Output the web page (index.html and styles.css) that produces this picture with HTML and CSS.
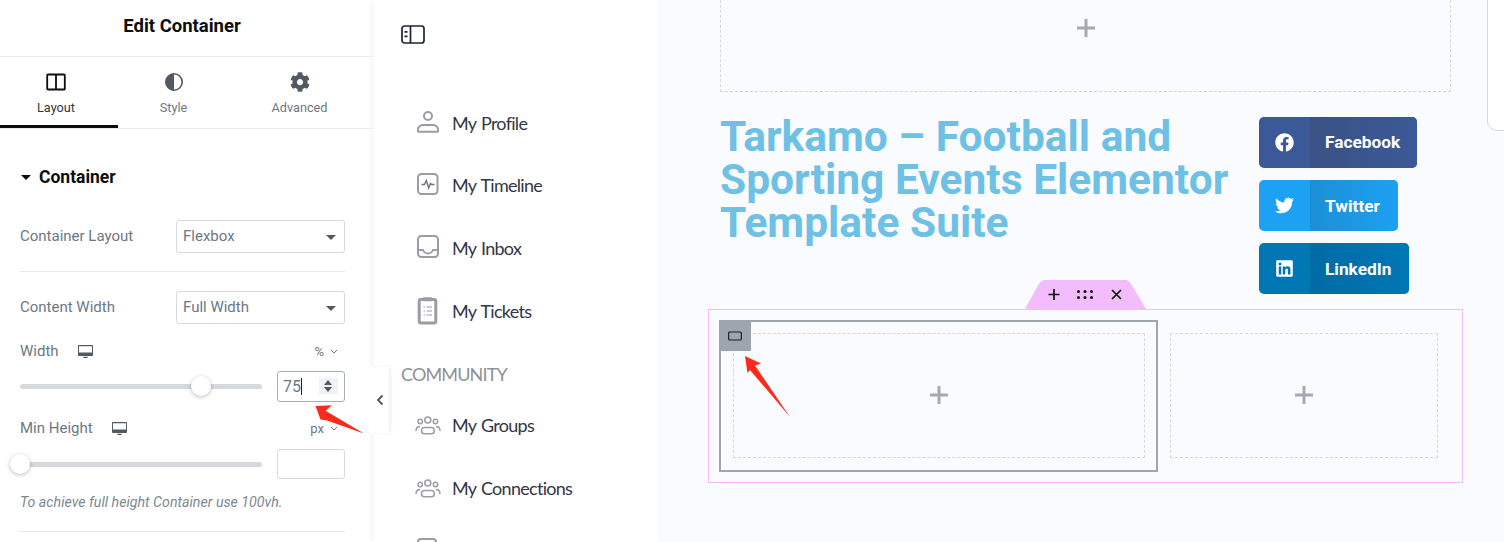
FILE: index.html
```html
<!DOCTYPE html>
<html lang="en">
<head>
    <meta charset="UTF-8">
    <meta name="viewport" content="width=device-width, initial-scale=1.0">
    <title>Edit Container</title>
    <link rel="stylesheet" href="styles.css">
</head>
<body>
    <div class="app">
        <!-- Editor panel -->
        <aside class="panel">
            <header class="panel-header">Edit Container</header>
            <nav class="tabs">
                <div class="tab tab-layout active">
                    <svg class="tab-icon" viewBox="0 0 20 20"><path d="M2 2.5h16a.8.8 0 0 1 .8.8v13.4a.8.8 0 0 1-.8.8H2a.8.8 0 0 1-.8-.8V3.300a.8.8 0 0 1 .8-.8zM10 2.500v15" fill="none" stroke="#0c0d0e" stroke-width="1.800"/></svg>
                    <span>Layout</span>
                </div>
                <div class="tab tab-style">
                    <svg class="tab-icon" viewBox="0 0 20 20"><circle cx="10" cy="10" r="8.200" fill="none" stroke="#515962" stroke-width="1.600"/><path d="M10 1.800a8.200 8.200 0 0 0 0 16.400z" fill="#515962"/></svg>
                    <span>Style</span>
                </div>
                <div class="tab tab-advanced">
                    <svg class="tab-icon" viewBox="0 0 512 512"><path fill="#515962" d="M487.4 315.7l-42.6-24.6c4.3-23.2 4.3-47 0-70.2l42.6-24.6c4.9-2.800 7.100-8.600 5.500-14-11.100-35.600-30-67.800-54.700-94.600-3.800-4.100-10-5.100-14.800-2.300L380.800 110c-17.900-15.400-38.500-27.300-60.800-35.100V25.800c0-5.600-3.900-10.500-9.400-11.700-36.700-8.200-74.300-7.800-109.200 0-5.500 1.200-9.400 6.100-9.400 11.700V75c-22.200 7.900-42.800 19.800-60.800 35.100L88.700 85.500c-4.900-2.800-11-1.900-14.800 2.300-24.700 26.700-43.600 58.900-54.700 94.600-1.700 5.400.6 11.200 5.500 14L67.300 221c-4.300 23.200-4.300 47 0 70.200l-42.6 24.600c-4.900 2.800-7.100 8.600-5.500 14 11.100 35.600 30 67.800 54.700 94.600 3.800 4.100 10 5.100 14.800 2.300l42.600-24.600c17.900 15.400 38.500 27.300 60.800 35.100v49.200c0 5.600 3.900 10.500 9.400 11.700 36.700 8.200 74.300 7.800 109.200 0 5.500-1.200 9.400-6.100 9.400-11.700v-49.200c22.200-7.900 42.800-19.800 60.800-35.100l42.600 24.600c4.900 2.800 11 1.900 14.800-2.300 24.700-26.700 43.600-58.900 54.700-94.600 1.500-5.500-.7-11.300-5.600-14.100zM256 336c-44.100 0-80-35.900-80-80s35.900-80 80-80 80 35.900 80 80-35.900 80-80 80z"/></svg>
                    <span>Advanced</span>
                </div>
            </nav>

            <div class="panel-body">
                <div class="section-title"><span class="caret-big"></span>Container</div>

                <div class="field field-first">
                    <label>Container Layout</label>
                    <div class="select">Flexbox<span class="caret"></span></div>
                </div>
                <div class="divider divider-one"></div>
                <div class="field">
                    <label>Content Width</label>
                    <div class="select">Full Width<span class="caret"></span></div>
                </div>

                <div class="unit-row unit-width">
                    <label>Width</label>
                    <svg class="device" viewBox="0 0 14 14"><path d="M1 1.500h12a.7.7 0 0 1 .7.7v7.600a.7.7 0 0 1-.7.7H1a.7.7 0 0 1-.7-.7V2.200a.7.7 0 0 1 .7-.7z" fill="none" stroke="#515962" stroke-width="1.200"/><path d="M.5 8h13v2.500H.5zM5 12h4v1H5z" fill="#515962"/></svg>
                    <span class="unit">%<svg class="chev" viewBox="0 0 8 5"><path d="M1 1l3 3 3-3" fill="none" stroke="#6d7882" stroke-width="1"/></svg></span>
                </div>
                <div class="slider-row">
                    <div class="slider"><span class="thumb thumb-width"></span></div>
                    <div class="num-input num-active">
                        <span class="num-value">75</span>
                        <span class="spinner"><i class="up"></i><i class="down"></i></span>
                    </div>
                </div>

                <div class="unit-row unit-height">
                    <label>Min Height</label>
                    <svg class="device" viewBox="0 0 14 14"><path d="M1 1.500h12a.7.7 0 0 1 .7.7v7.600a.7.7 0 0 1-.7.7H1a.7.7 0 0 1-.7-.7V2.200a.7.7 0 0 1 .7-.7z" fill="none" stroke="#515962" stroke-width="1.200"/><path d="M.5 8h13v2.500H.5zM5 12h4v1H5z" fill="#515962"/></svg>
                    <span class="unit">px<svg class="chev" viewBox="0 0 8 5"><path d="M1 1l3 3 3-3" fill="none" stroke="#6d7882" stroke-width="1"/></svg></span>
                </div>
                <div class="slider-row slider-row-height">
                    <div class="slider"><span class="thumb thumb-height"></span></div>
                    <div class="num-input"></div>
                </div>
                <p class="note">To achieve full height Container use 100vh.</p>
                <div class="divider divider-two"></div>
            </div>
        </aside>

        <!-- Site menu inside the page -->
        <section class="site-nav">
            <svg class="menu-toggle" viewBox="0 0 24 19"><rect x="1" y="1" width="22" height="17" rx="2.500" fill="none" stroke="#1f2433" stroke-width="1.700"/><path d="M9.500 1v17" stroke="#1f2433" stroke-width="1.700"/><path d="M3.500 6h3v1.800h-3zM3.500 10.500h3v1.800h-3z" fill="#1f2433"/></svg>

            <ul class="menu menu-account">
                <li>
                    <svg viewBox="0 0 24 24"><circle cx="12" cy="5" r="4"/><path d="M2 20v-1.500c0-2.800 2.700-4.500 5.500-4.500h9c2.800 0 5.500 1.700 5.500 4.500V20a.8.8 0 0 1-.8.8H2.800A.8.8 0 0 1 2 20z"/></svg>
                    My Profile
                </li>
                <li>
                    <svg viewBox="0 0 24 24"><rect x="2" y="0" width="19.500" height="20" rx="3.500"/><path d="M5.500 10.500h3l1.800-4 2.400 7.500 1.800-4.500 1 1h3" stroke="#6f717b" stroke-width="1.400"/></svg>
                    My Timeline
                </li>
                <li>
                    <svg viewBox="0 0 24 24"><rect x="2" y="-1" width="20" height="21" rx="3.500"/><path d="M2 13h5c1 2.500 2.500 3.500 5 3.500s4-1 5-3.500h5"/></svg>
                    My Inbox
                </li>
                <li>
                    <svg class="ticket-icon" viewBox="0 0 24 24"><rect x="3.200" y="-.5" width="16.600" height="23.500" rx="1.500"/><path d="M8 -2h7v2.500H8z" fill="#9b9ca5" stroke-width="1.500"/><path d="M7.500 7h1.500M10.500 7h5.500M7.500 11h1.500M10.500 11h5.500M7.500 15h1.500M10.500 15h5.500" stroke-width="1.200"/></svg>
                    My Tickets
                </li>
            </ul>

            <div class="menu-heading">COMMUNITY</div>

            <ul class="menu">
                <li>
                    <svg class="group-icon" viewBox="0 0 26 24"><circle cx="12.800" cy="7" r="3"/><circle cx="5.200" cy="8.500" r="2.200"/><circle cx="20.500" cy="8.500" r="2.200"/><rect x="6.500" y="14.500" width="12.800" height="6.300" rx="3.100"/><path d="M1 18c0-2.500 1.500-4.500 4-4.500M25 18c0-2.500-1.500-4.500-4-4.500"/></svg>
                    My Groups
                </li>
                <li>
                    <svg class="group-icon" viewBox="0 0 26 24"><circle cx="12.800" cy="7" r="3"/><circle cx="5.200" cy="8.500" r="2.200"/><circle cx="20.500" cy="8.500" r="2.200"/><rect x="6.500" y="14.500" width="12.800" height="6.300" rx="3.100"/><path d="M1 18c0-2.500 1.500-4.500 4-4.500M25 18c0-2.500-1.500-4.500-4-4.500"/></svg>
                    My Connections
                </li>
                <li>
                    <svg viewBox="0 0 24 24"><rect x="2" y="0" width="18" height="21" rx="3"/></svg>
                </li>
            </ul>
        </section>

        <!-- Canvas preview -->
        <main class="preview">
            <div class="drop-top">
                <svg class="plus" viewBox="0 0 20 20"><path d="M10 1v18M1 10h18"/></svg>
            </div>

            <div class="hero">
                <h1>Tarkamo – Football and Sporting Events Elementor Template Suite</h1>
                <div class="share-buttons">
                    <a class="share share-facebook">
                        <span class="share-icon"><svg viewBox="0 0 512 512"><path fill="#fff" d="M504 256C504 119 393 8 256 8S8 119 8 256c0 123.780 90.690 226.380 209.250 245V327.690h-63V256h63v-54.640c0-62.150 37-96.480 93.670-96.480 27.140 0 55.520 4.840 55.520 4.840v61h-31.280c-30.800 0-40.410 19.120-40.410 38.730V256h68.780l-11 71.690h-57.780V501C413.310 482.380 504 379.780 504 256z"/></svg></span>
                        <span class="share-label">Facebook</span>
                    </a>
                    <a class="share share-twitter">
                        <span class="share-icon"><svg viewBox="0 0 512 512"><path fill="#fff" d="M459.370 151.716c.325 4.548.325 9.097.325 13.645 0 138.720-105.583 298.558-298.558 298.558-59.452 0-114.680-17.219-161.137-47.106 8.447.974 16.568 1.299 25.340 1.299 49.055 0 94.213-16.568 130.274-44.832-46.132-.975-84.792-31.188-98.112-72.772 6.498.974 12.995 1.624 19.818 1.624 9.421 0 18.843-1.300 27.614-3.573-48.081-9.747-84.143-51.980-84.143-102.985v-1.299c13.969 7.797 30.214 12.670 47.431 13.319-28.264-18.843-46.781-51.005-46.781-87.391 0-19.492 5.197-37.360 14.294-52.954 51.655 63.675 129.300 105.258 216.365 109.807-1.624-7.797-2.599-15.918-2.599-24.040 0-57.828 46.782-104.934 104.934-104.934 30.213 0 57.502 12.670 76.670 33.137 23.715-4.548 46.456-13.320 66.599-25.340-7.798 24.366-24.366 44.833-46.132 57.827 21.117-2.273 41.584-8.122 60.426-16.243-14.292 20.791-32.161 39.308-52.628 54.253z"/></svg></span>
                        <span class="share-label">Twitter</span>
                    </a>
                    <a class="share share-linkedin">
                        <span class="share-icon"><svg viewBox="0 0 448 512"><path fill="#fff" d="M416 32H31.900C14.300 32 0 46.500 0 64.300v383.400C0 465.500 14.300 480 31.900 480H416c17.600 0 32-14.500 32-32.300V64.300c0-17.800-14.400-32.300-32-32.300zM135.400 416H69V202.200h66.500V416zm-33.200-243c-21.300 0-38.500-17.300-38.500-38.500S80.900 96 102.200 96c21.200 0 38.500 17.300 38.500 38.500 0 21.300-17.200 38.500-38.500 38.500zm282.100 243h-66.400V312c0-24.800-.5-56.700-34.500-56.700-34.600 0-39.900 27-39.900 54.900V416h-66.400V202.200h63.700v29.200h.9c8.900-16.800 30.600-34.500 62.900-34.500 67.200 0 79.700 44.300 79.700 101.900V416z"/></svg></span>
                        <span class="share-label">LinkedIn</span>
                    </a>
                </div>
            </div>

            <div class="row-section">
                <svg class="section-handle" viewBox="0 0 121 29">
                    <path d="M0 29L13.500 4.500Q16 0 20 0H100Q104 0 106.500 4.500L121 29z" fill="#f3bcfc"/>
                    <path d="M29 9v11M23.500 14.500h11M87 10l9 9M96 10l-9 9" stroke="#111" stroke-width="1.700" fill="none"/>
                    <g fill="#111"><circle cx="53.500" cy="11.500" r="1.500"/><circle cx="60" cy="11.500" r="1.500"/><circle cx="66.500" cy="11.500" r="1.500"/><circle cx="53.500" cy="17.500" r="1.500"/><circle cx="60" cy="17.500" r="1.500"/><circle cx="66.500" cy="17.500" r="1.500"/></g>
                </svg>
                <div class="col col-selected">
                    <span class="col-handle"><svg viewBox="0 0 16 12"><rect x="1.700" y="2" width="12.600" height="8" rx="1" fill="none" stroke="#14202e" stroke-width="1.200"/></svg></span>
                    <div class="drop-zone">
                        <svg class="plus" viewBox="0 0 20 20"><path d="M10 1v18M1 10h18"/></svg>
                    </div>
                </div>
                <div class="col col-plain">
                    <div class="drop-zone">
                        <svg class="plus" viewBox="0 0 20 20"><path d="M10 1v18M1 10h18"/></svg>
                    </div>
                </div>
            </div>

            <div class="corner-box"></div>
        </main>

        <!-- Overlays -->
        <div class="collapse-tab"><svg viewBox="0 0 8 12"><path d="M6.500 1.500L2 6l4.500 4.500" fill="none" stroke="#4e5660" stroke-width="1.800"/></svg></div>
        <svg class="arrow arrow-input" viewBox="0 0 60 40"><path d="M1.500 11L18 10.300 11.500 15.700 50 38.500 13 25.500 6.500 24.500z" fill="#fb2a1c"/></svg>
        <svg class="arrow arrow-handle" viewBox="0 0 60 70"><path d="M5 6L21 13.500 15 15.500 50 67 10 20 7.500 23z" fill="#fb2a1c"/></svg>
    </div>
</body>
</html>
```

FILE: styles.css
```css
body {
    margin: 0;
    font-family: 'Roboto', sans-serif;
    overflow: hidden;
    background: #fff;
}

.app {
    position: relative;
    display: flex;
    height: 542px;
    overflow: hidden;
}

/* Editor panel */
.panel {
    width: 370px;
    flex: none;
    background: #fff;
    box-shadow: 2px 0 6px rgba(0,0,0,0.05);
    z-index: 1;
}

.panel-header {
    height: 56px;
    line-height: 52px;
    padding-right: 6px;
    text-align: center;
    font-size: 18.500px;
    font-weight: 700;
    color: #0c0d0e;
    border-bottom: 1px solid #e6e8ea;
}

.tabs {
    display: flex;
    height: 71px;
    border-bottom: 1px solid #e6e8ea;
}

.tab {
    display: flex;
    flex-direction: column;
    align-items: center;
    box-sizing: border-box;
    flex: none;
    padding-top: 15px;
    font-size: 12.700px;
    color: #6d7882;
}

.tab span {
    margin-top: 8px;
    line-height: 16px;
}

.tab-icon {
    width: 20px;
    height: 20px;
}

.tab-layout {
    width: 118px;
    padding-right: 6px;
}

.tab-style {
    width: 111px;
}

.tab-advanced {
    width: 141px;
}

.tab.active {
    color: #32373c;
    border-bottom: 3px solid #0c0d0e;
}

.panel-body {
    padding: 0 25px 0 20px;
}

.section-title {
    display: flex;
    align-items: center;
    margin-top: 38px;
    height: 20px;
    font-size: 17.500px;
    font-weight: 700;
    color: #0c0d0e;
}

.caret-big {
    width: 0;
    height: 0;
    margin: 1px 8px 0 1px;
    border-left: 5px solid transparent;
    border-right: 5px solid transparent;
    border-top: 5px solid #0c0d0e;
}

.field {
    display: flex;
    justify-content: space-between;
    align-items: center;
    font-size: 15px;
    color: #6d7882;
}

.field label {
    padding-bottom: 2px;
}

.field-first {
    margin-top: 33px;
}

.select {
    position: relative;
    box-sizing: border-box;
    width: 169px;
    height: 33px;
    line-height: 31px;
    padding-left: 6px;
    border: 1px solid #d5d8dc;
    border-radius: 3px;
}

.caret {
    position: absolute;
    right: 8px;
    top: 14px;
    border-left: 5px solid transparent;
    border-right: 5px solid transparent;
    border-top: 5px solid #515962;
}

.divider {
    height: 1px;
    background: #e6e8ea;
}

.divider-one {
    margin: 18px 0 19px;
}

.divider-two {
    margin-top: 20px;
}

.unit-row {
    display: flex;
    align-items: center;
    height: 20px;
    font-size: 15px;
    color: #6d7882;
}

.unit-width {
    margin-top: 17px;
}

.unit-height {
    margin-top: 16px;
}

.device {
    width: 15px;
    height: 15px;
    margin-left: 19px;
}

.unit {
    display: flex;
    align-items: center;
    margin-left: auto;
    margin-right: 7px;
    font-size: 13px;
}

.chev {
    width: 8px;
    height: 5px;
    margin-left: 6px;
}

.slider-row {
    display: flex;
    align-items: center;
    justify-content: space-between;
    margin-top: 10px;
}

.slider-row-height {
    margin-top: 11px;
}

.slider {
    position: relative;
    width: 242px;
    height: 5px;
    border-radius: 3px;
    background: #d5d8dc;
}

.thumb {
    position: absolute;
    top: -8px;
    width: 20px;
    height: 20px;
    border-radius: 50%;
    background: #fff;
    box-shadow: 0 1px 4px rgba(0,0,0,0.28);
}

.thumb-width {
    left: 171px;
}

.thumb-height {
    left: -10px;
}

.num-input {
    position: relative;
    box-sizing: border-box;
    display: flex;
    align-items: center;
    width: 68px;
    height: 31px;
    border: 1px solid #d5d8dc;
    border-radius: 3px;
}

.slider-row-height .num-input {
    height: 30px;
}

.num-active {
    border-color: #a4afb7;
    font-size: 16px;
    color: #6d7882;
}

.num-value {
    margin-left: 5px;
    height: 17px;
    line-height: 17px;
    border-right: 1px solid #222;
}

.spinner {
    position: absolute;
    top: 6px;
    right: 6px;
    width: 19px;
    height: 16px;
    background: #f1f2f3;
}

.spinner i {
    position: absolute;
    left: 5px;
    border-left: 4.500px solid transparent;
    border-right: 4.500px solid transparent;
}

.spinner .up {
    top: 2px;
    border-bottom: 5px solid #515962;
}

.spinner .down {
    bottom: 2px;
    border-top: 5px solid #515962;
}

.note {
    margin: 14px 0 0;
    font-size: 14.200px;
    font-style: italic;
    color: #7d8790;
    line-height: 18px;
}

/* Site menu */
.site-nav {
    width: 288px;
    flex: none;
    box-sizing: border-box;
    padding: 25px 0 0 31px;
    background: #fff;
    font-family: 'Lato', sans-serif;
    color: #333645;
}

.menu-toggle {
    display: block;
    width: 24px;
    height: 19px;
}

.menu {
    list-style: none;
    margin: 0;
    padding: 0 0 0 15px;
}

.menu li {
    display: flex;
    align-items: center;
    gap: 12px;
    height: 24px;
    margin-bottom: 39px;
    font-size: 18px;
    letter-spacing: -0.72px;
    word-spacing: 1.200px;
}

.menu svg {
    width: 24px;
    height: 24px;
    flex: none;
    fill: none;
    stroke: #9b9ca5;
    stroke-width: 2;
    overflow: visible;
}

.menu svg.group-icon {
    width: 26px;
    margin: 0 -1px;
    stroke-width: 1.500;
}

.menu svg.ticket-icon {
    stroke-width: 3;
}

.menu-account {
    margin-top: 67px;
}

.menu-account li:first-child {
    margin-bottom: 38px;
}

.menu-account li:not(:first-child) svg {
    margin-top: 2px;
}

.menu-heading {
    margin: 0 0 27px;
    font-size: 18px;
    line-height: 24px;
    letter-spacing: -0.85px;
    color: #8f9099;
}

/* Preview */
.preview {
    position: relative;
    flex: 1;
    background: #fafbfe;
    padding-left: 62px;
}

.plus {
    width: 20px;
    height: 20px;
    fill: none;
    stroke: #a4a9b3;
    stroke-width: 3;
}

.drop-top {
    display: flex;
    align-items: center;
    justify-content: center;
    box-sizing: border-box;
    width: 731px;
    height: 92px;
    padding-bottom: 36px;
    border: 1px dashed #d5d8dc;
    border-top: none;
}

.hero {
    display: flex;
    margin-top: 25px;
}

h1 {
    width: 539px;
    flex: none;
    margin: -1px 0 0;
    font-size: 42.500px;
    line-height: 42.800px;
    font-weight: 700;
    color: #6ec1e4;
}

.share-buttons {
    display: flex;
    flex-direction: column;
    align-items: flex-start;
    gap: 12px;
}

.share {
    display: flex;
    height: 51px;
    border-radius: 5px;
    overflow: hidden;
    color: #fff;
    font-size: 17.300px;
    font-weight: 700;
}

.share-icon {
    display: flex;
    align-items: center;
    justify-content: center;
    width: 51px;
}

.share-icon svg {
    width: 19px;
    height: 19px;
}

.share-label {
    display: flex;
    align-items: center;
    padding: 0 17px 0 15px;
}

.share-facebook {
    background: #3b5998;
}

.share-facebook .share-label {
    background: linear-gradient(90deg, #3a5285, #3b5998);
    padding-bottom: 1px;
}

.share-twitter {
    background: #1da1f2;
}

.share-twitter .share-label {
    background: linear-gradient(90deg, #1c8fd6, #1da1f2);
    padding-right: 18px;
}

.share-linkedin {
    background: #0077b5;
}

.share-linkedin .share-label {
    background: linear-gradient(90deg, #006ba4, #0077b5);
    padding-right: 18px;
}

.row-section {
    position: relative;
    display: flex;
    box-sizing: border-box;
    width: 755px;
    height: 174px;
    margin: 15px 0 0 -12px;
    padding: 10px 12px 10px 10px;
    border: 1px solid #f3bcfc;
}

.section-handle {
    position: absolute;
    top: -30px;
    left: 316px;
    width: 121px;
    height: 29px;
}

.col {
    box-sizing: border-box;
    padding: 12px;
}

.col-selected {
    position: relative;
    width: 439px;
    height: 152px;
    padding: 11px 11px 12px 12px;
    border: 2px solid #9da5ae;
}

.col-plain {
    width: 292px;
    padding-top: 13px;
    padding-bottom: 13px;
}

.col-handle {
    position: absolute;
    top: -1px;
    left: -2px;
    display: flex;
    align-items: center;
    justify-content: center;
    width: 32px;
    height: 30px;
    background: #9da5ae;
}

.col-handle svg {
    width: 16px;
    height: 12px;
}

.drop-zone {
    display: flex;
    align-items: center;
    justify-content: center;
    box-sizing: border-box;
    height: 125px;
    padding-bottom: 1px;
    border: 1px dashed #d5d8dc;
}

.corner-box {
    position: absolute;
    top: -10px;
    right: -10px;
    width: 25px;
    height: 139px;
    border: 1px solid #d5d8dc;
    border-radius: 10px;
    background: #fff;
}

/* Overlays */
.collapse-tab {
    position: absolute;
    top: 367px;
    left: 370px;
    z-index: 2;
    display: flex;
    align-items: center;
    justify-content: center;
    width: 19px;
    height: 66px;
    background: #fff;
    box-shadow: 2px 0 4px rgba(0,0,0,0.06);
}

.collapse-tab svg {
    width: 8px;
    height: 12px;
}

.arrow {
    position: absolute;
    z-index: 3;
}

.arrow-input {
    top: 395px;
    left: 314px;
    width: 60px;
    height: 40px;
}

.arrow-handle {
    top: 350px;
    left: 740px;
    width: 60px;
    height: 70px;
}
```
